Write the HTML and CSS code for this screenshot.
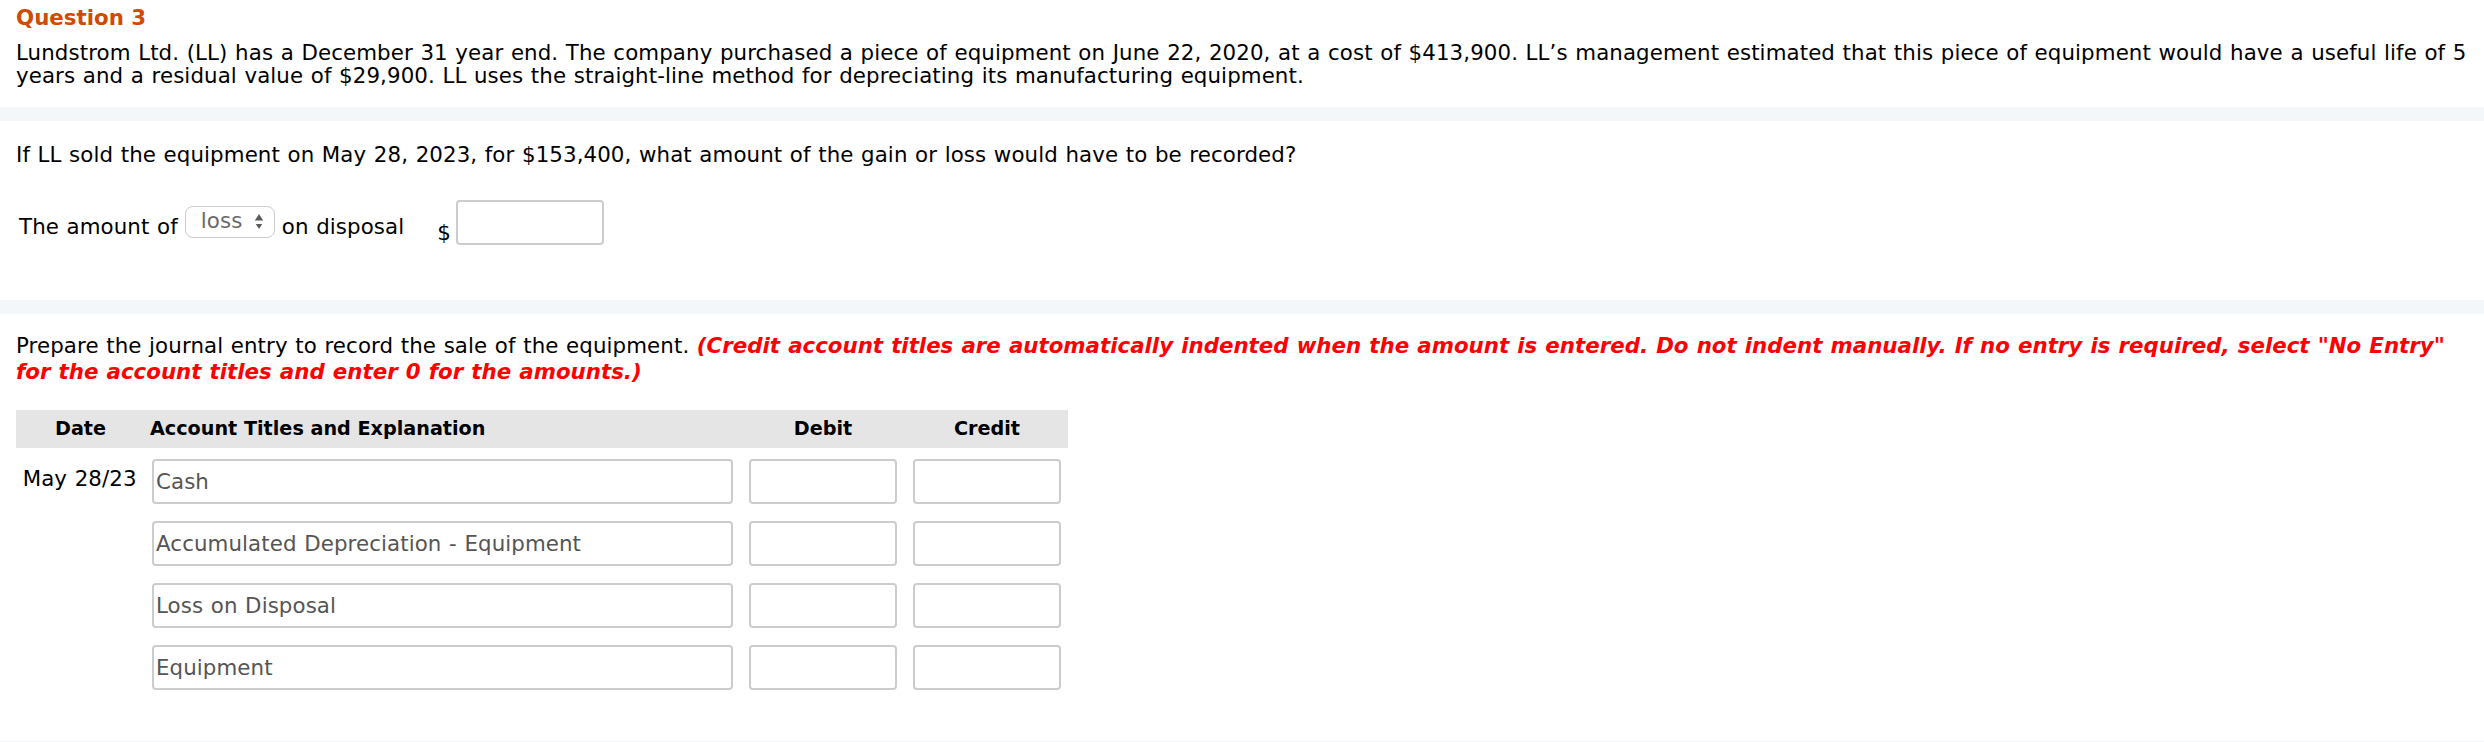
FILE: index.html
```html
<!DOCTYPE html>
<html lang="en">
<head>
<meta charset="utf-8">
<title>Question 3</title>
<link rel="stylesheet" href="styles.css">
</head>
<body>
<div class="page">
  <section class="block intro">
    <h2 class="qtitle">Question 3</h2>
    <p class="text para">Lundstrom Ltd. (LL) has a December 31 year end. The company purchased a piece of equipment on June 22, 2020, at a cost of $413,900. LL’s management estimated that this piece of equipment would have a useful life of 5 years and a residual value of $29,900. LL uses the straight-line method for depreciating its manufacturing equipment.</p>
  </section>
  <div class="band"></div>
  <section class="block part-a">
    <p class="text">If LL sold the equipment on May 28, 2023, for $153,400, what amount of the gain or loss would have to be recorded?</p>
    <div class="amount-row">
      <span class="lbl">The amount of</span>
      <span class="select">
        <span class="select-val">loss</span>
        <svg class="select-arrows" width="10" height="18" viewBox="0 0 10 18" aria-hidden="true">
          <polygon points="0.8,7.5 5,1 9.2,7.5" />
          <polygon points="1.8,11 5,16 8.2,11" />
        </svg>
      </span>
      <span class="lbl">on disposal</span>
      <span class="dollar">$</span>
      <input class="field num" type="text">
    </div>
  </section>
  <div class="band"></div>
  <section class="block part-b">
    <p class="text instr">Prepare the journal entry to record the sale of the equipment. <em class="note">(Credit account titles are automatically indented when the amount is entered. Do not indent manually. If no entry is required, select "No Entry" for the account titles and enter 0 for the amounts.)</em></p>
    <div class="journal">
      <div class="jgrid jhead">
        <span class="h-date">Date</span>
        <span class="h-acct">Account Titles and Explanation</span>
        <span class="h-num">Debit</span>
        <span class="h-num">Credit</span>
      </div>
      <div class="jbody">
        <div class="jgrid jrow">
          <span class="date">May 28/23</span>
          <input class="field acct" type="text" value="Cash">
          <input class="field num" type="text">
          <input class="field num" type="text">
        </div>
        <div class="jgrid jrow">
          <span class="date"></span>
          <input class="field acct" type="text" value="Accumulated Depreciation - Equipment">
          <input class="field num" type="text">
          <input class="field num" type="text">
        </div>
        <div class="jgrid jrow">
          <span class="date"></span>
          <input class="field acct" type="text" value="Loss on Disposal">
          <input class="field num" type="text">
          <input class="field num" type="text">
        </div>
        <div class="jgrid jrow">
          <span class="date"></span>
          <input class="field acct" type="text" value="Equipment">
          <input class="field num" type="text">
          <input class="field num" type="text">
        </div>
      </div>
    </div>
  </section>
  <div class="band"></div>
</div>
</body>
</html>
```

FILE: styles.css
```css
html, body {
  margin: 0;
  padding: 0;
  background: #ffffff;
}

body {
  font-family: "DejaVu Sans", Verdana, sans-serif;
  font-size: 21.33px;
  color: #000000;
  letter-spacing: 0.1px;
  word-spacing: 0.7px;
}

.page {
  display: flex;
  flex-direction: column;
}

.block {
  padding-left: 16px;
  padding-right: 16px;
}

.text {
  margin: 0;
  line-height: 24px;
}

.intro {
  padding-top: 5.6px;
  padding-bottom: 20.4px;
}

.qtitle {
  margin: 0;
  font-size: 21.33px;
  line-height: 24px;
  font-weight: bold;
  color: #d04a02;
  letter-spacing: 0;
  word-spacing: 0;
}

.para {
  margin-top: 11.5px;
  line-height: 23px;
}

.band {
  height: 14px;
  background: #f4f7fa;
}

/* part a */
.part-a {
  padding-top: 22px;
  padding-bottom: 55px;
}

.amount-row {
  display: flex;
  align-items: center;
  margin-top: 32.4px;
  padding-left: 3px;
  height: 45px;
}

.lbl {
  line-height: 24px;
  margin-top: 10px;
}

.select {
  display: inline-flex;
  align-items: center;
  justify-content: space-between;
  box-sizing: border-box;
  width: 90px;
  height: 32px;
  margin: 0 7px 0 7px;
  padding: 0 10px 0 15px;
  border: 1.5px solid #cccccc;
  border-radius: 8px;
  background: #ffffff;
  color: #6a6a6a;
}

.select-val {
  line-height: 24px;
  margin-top: -2px;
}

.select-arrows {
  fill: #5a5a5a;
  display: block;
}

.dollar {
  line-height: 24px;
  margin-left: 33px;
  margin-right: 5px;
  margin-top: 22px;
}

.field {
  box-sizing: border-box;
  height: 45px;
  margin: 0;
  padding: 0 2px;
  border: 2px solid #cccccc;
  border-radius: 4px;
  background: #ffffff;
  font-family: "DejaVu Sans", Verdana, sans-serif;
  font-size: 21.33px;
  letter-spacing: 0.1px;
  word-spacing: 0.7px;
  color: #555555;
  outline: none;
}

.field.num {
  width: 148px;
}

/* part b */
.part-b {
  padding-top: 18.9px;
  padding-bottom: 50.7px;
}

.instr {
  line-height: 26px;
}

.note {
  color: #ff0000;
  font-weight: bold;
  font-style: italic;
  letter-spacing: 0;
  word-spacing: 0.7px;
}

.journal {
  margin-top: 25.1px;
  width: 1052px;
}

.jgrid {
  display: grid;
  grid-template-columns: 120px 581px 148px 148px;
  column-gap: 16px;
  padding-right: 7px;
}

.jhead {
  height: 38px;
  align-items: center;
  background: #e5e5e5;
  font-size: 19.2px;
  font-weight: bold;
  line-height: 24px;
  letter-spacing: 0;
  word-spacing: 0;
}

.h-date {
  text-align: center;
  padding-left: 9px;
}

.h-acct {
  margin-left: -2px;
}

.h-num {
  text-align: center;
}

.jbody {
  display: flex;
  flex-direction: column;
  gap: 17px;
  padding-top: 11px;
}

.jrow {
  height: 45px;
}

.date {
  padding-top: 8.3px;
  padding-left: 6.7px;
  line-height: 24px;
  white-space: nowrap;
}

.field.acct {
  width: 581px;
}
```
